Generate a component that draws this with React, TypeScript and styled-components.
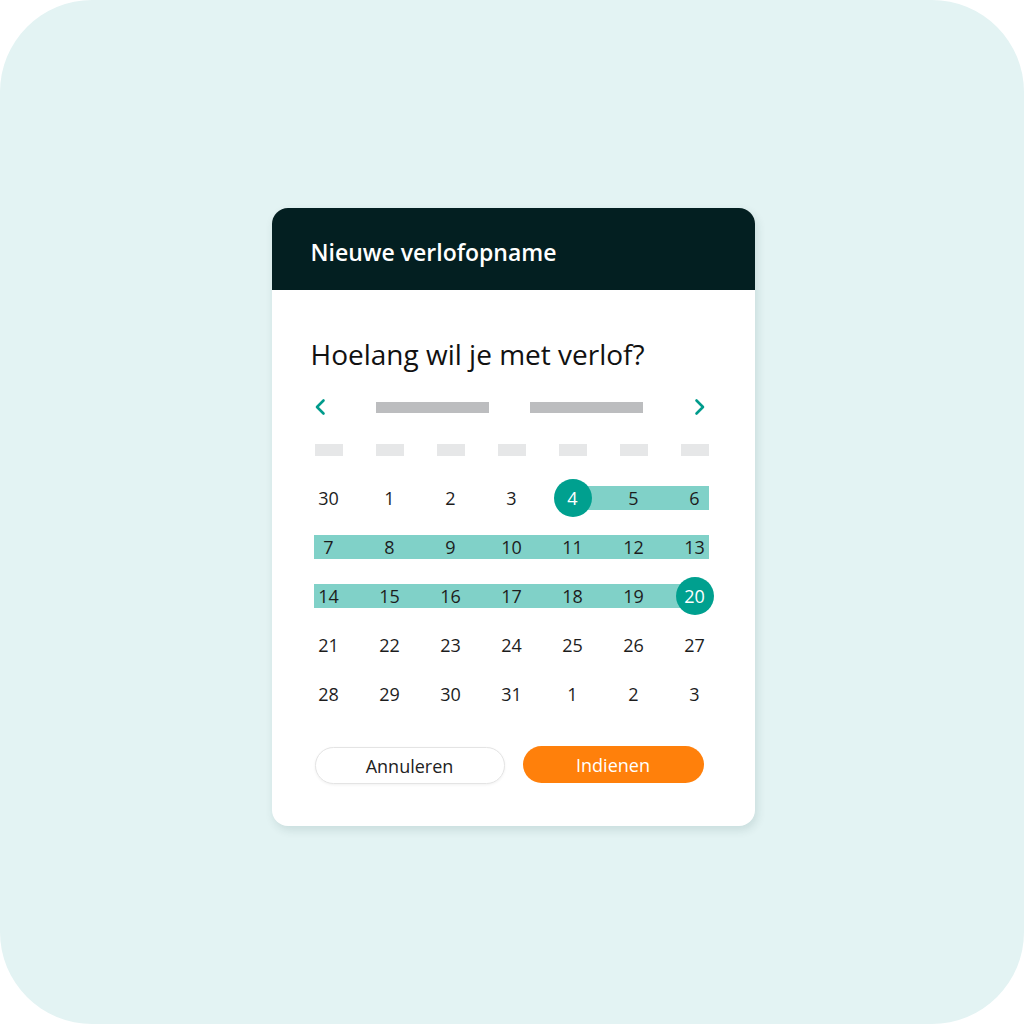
import * as React from 'react';
import styled, { createGlobalStyle } from 'styled-components';

const GlobalStyle = createGlobalStyle`
  html, body {
    margin: 0;
    padding: 0;
    background: #ffffff;
  }
  body {
    font-family: "Open Sans", "Noto Sans", sans-serif;
  }
`;

const Backdrop = styled.div`
  width: 1024px;
  height: 1024px;
  background: #e3f3f3;
  border-radius: 92px;
  display: flex;
  justify-content: center;
  align-items: flex-start;
  padding-top: 208px;
  padding-left: 2px;
  box-sizing: border-box;
`;

const Card = styled.div`
  width: 483px;
  background: #ffffff;
  border-radius: 16px;
  overflow: hidden;
  box-shadow: 2px 4px 10px rgba(0, 60, 60, 0.12);
`;

const Header = styled.div`
  height: 82px;
  box-sizing: border-box;
  padding: 5px 39px 0;
  background: #031f21;
  color: #ffffff;
  display: flex;
  align-items: center;
  font-size: 23px;
  font-weight: 600;
`;

const Body = styled.div`
  padding: 46px 46px 42px 39px;
`;

const Question = styled.h2`
  margin: 0 0 21px 0;
  font-size: 28px;
  font-weight: 400;
  color: #111;
  line-height: 36px;
`;

const Nav = styled.div`
  display: flex;
  align-items: center;
  height: 28px;
  margin-bottom: 18px;
`;

const NavButton = styled.div`
  width: 18px;
  height: 28px;
  display: flex;
  align-items: center;
  justify-content: center;
`;

const Placeholder = styled.div<{ $w: number; $h: number; $tone: string }>`
  width: ${p => p.$w}px;
  height: ${p => p.$h}px;
  background: ${p => p.$tone};
`;

const NavCenter = styled.div`
  flex: 1;
  display: flex;
  justify-content: center;
  gap: 41px;
`;

const Grid = styled.div`
  display: flex;
  flex-direction: column;
  padding-left: 4px;
  width: 394px;
`;

const WeekRow = styled.div<{ $h: number }>`
  position: relative;
  display: grid;
  grid-template-columns: repeat(7, 28px);
  justify-content: space-between;
  align-items: center;
  height: ${p => p.$h}px;
`;

const Spacer = styled.div<{ $h: number }>`
  height: ${p => p.$h}px;
`;

const RangeBand = styled.div`
  position: absolute;
  top: 50%;
  height: 24px;
  margin-top: -12px;
  background: #80d1c8;
  z-index: 0;
`;

const Cell = styled.div`
  position: relative;
  z-index: 1;
  display: flex;
  align-items: center;
  justify-content: center;
  height: 100%;
`;

const Day = styled.span<{ $edge?: boolean }>`
  display: flex;
  align-items: center;
  justify-content: center;
  flex-shrink: 0;
  width: 38px;
  height: 38px;
  border-radius: 50%;
  font-size: 18px;
  color: ${p => (p.$edge ? '#ffffff' : '#1d1d1d')};
  background: ${p => (p.$edge ? '#00a08f' : 'transparent')};
`;

const Actions = styled.div`
  display: flex;
  align-items: center;
  gap: 18px;
  margin-top: 29px;
`;

const Button = styled.button<{ $primary?: boolean }>`
  height: 37px;
  border-radius: 19px;
  font-family: inherit;
  font-size: 18px;
  cursor: pointer;
  ${p =>
    p.$primary
      ? `
    width: 181px;
    background: #ff800b;
    color: #ffffff;
    border: none;
    margin-top: -2px;
  `
      : `
    width: 190px;
    margin-left: 4px;
    background: #ffffff;
    color: #222;
    border: 1.5px solid #e4e4e4;
    box-shadow: 0 1px 3px rgba(0,0,0,0.06);
  `}
`;

const Chevron = ({ dir }: { dir: 'left' | 'right' }) => (
  <svg width="14" height="18" viewBox="0 0 14 18" fill="none">
    <path
      d={dir === 'left' ? 'M10.5 2.5 L4 9 L10.5 15.5' : 'M3.5 2.5 L10 9 L3.5 15.5'}
      stroke="#009b8c"
      strokeWidth="2.6"
      strokeLinecap="round"
      strokeLinejoin="round"
    />
  </svg>
);

const weeks = [
  [30, 1, 2, 3, 4, 5, 6],
  [7, 8, 9, 10, 11, 12, 13],
  [14, 15, 16, 17, 18, 19, 20],
  [21, 22, 23, 24, 25, 26, 27],
  [28, 29, 30, 31, 1, 2, 3],
];

// selected range: row 0 col 4 -> row 2 col 6
const start = { row: 0, col: 4 };
const end = { row: 2, col: 6 };
const COL = 28;
const WIDTH = 394;
const STEP = (WIDTH - COL) / 6;

function bandFor(row: number) {
  if (row < start.row || row > end.row) return null;
  const left = row === start.row ? start.col * STEP + COL / 2 : -1;
  const right = row === end.row ? WIDTH - (end.col * STEP + COL / 2) : 0;
  return { left, right };
}

export default function App() {
  return (
    <>
      <GlobalStyle />
      <Backdrop>
        <Card>
          <Header>Nieuwe verlofopname</Header>
          <Body>
            <Question>Hoelang wil je met verlof?</Question>
            <Nav>
              <NavButton><Chevron dir="left" /></NavButton>
              <NavCenter>
                <Placeholder $w={113} $h={11} $tone="#bcbdbf" />
                <Placeholder $w={113} $h={11} $tone="#bcbdbf" />
              </NavCenter>
              <NavButton><Chevron dir="right" /></NavButton>
            </Nav>
            <Grid>
              <WeekRow $h={22}>
                {Array.from({ length: 7 }).map((_, i) => (
                  <Cell key={i}>
                    <Placeholder $w={28} $h={12} $tone="#e6e7e8" />
                  </Cell>
                ))}
              </WeekRow>
              <Spacer $h={12} />
              {weeks.map((week, r) => {
                const band = bandFor(r);
                return (
                  <WeekRow key={r} $h={49}>
                    {band && <RangeBand style={{ left: band.left, right: band.right }} />}
                    {week.map((d, c) => {
                      const edge =
                        (r === start.row && c === start.col) || (r === end.row && c === end.col);
                      return (
                        <Cell key={c}>
                          <Day $edge={edge}>{d}</Day>
                        </Cell>
                      );
                    })}
                  </WeekRow>
                );
              })}
            </Grid>
            <Actions>
              <Button>Annuleren</Button>
              <Button $primary>Indienen</Button>
            </Actions>
          </Body>
        </Card>
      </Backdrop>
    </>
  );
}
